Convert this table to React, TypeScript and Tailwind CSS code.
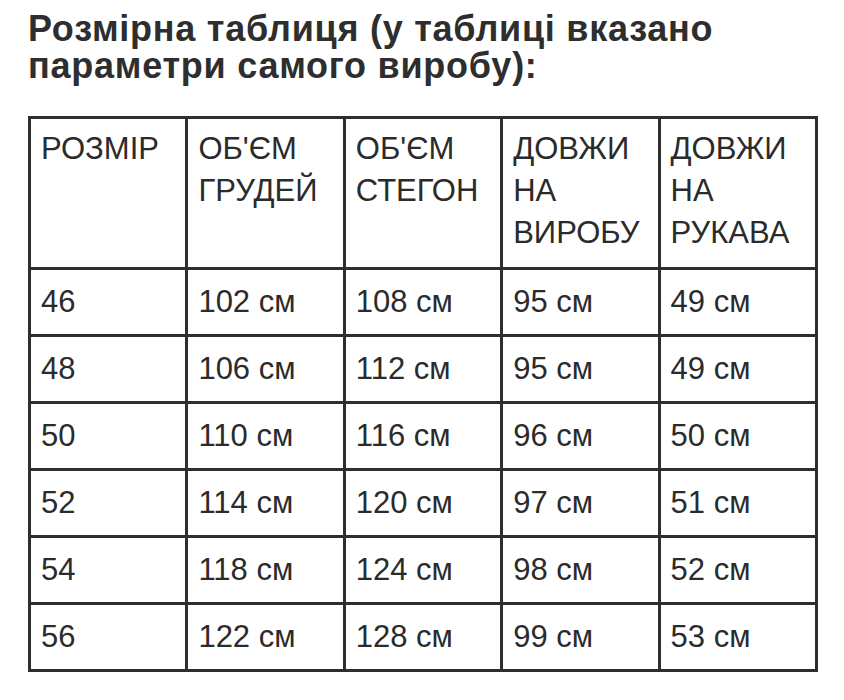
import React from "react";

const headers = [
  ["РОЗМІР"],
  ["ОБ'ЄМ", "ГРУДЕЙ"],
  ["ОБ'ЄМ", "СТЕГОН"],
  ["ДОВЖИ", "НА", "ВИРОБУ"],
  ["ДОВЖИ", "НА", "РУКАВА"],
];

const rows = [
  ["46", "102 см", "108 см", "95 см", "49 см"],
  ["48", "106 см", "112 см", "95 см", "49 см"],
  ["50", "110 см", "116 см", "96 см", "50 см"],
  ["52", "114 см", "120 см", "97 см", "51 см"],
  ["54", "118 см", "124 см", "98 см", "52 см"],
  ["56", "122 см", "128 см", "99 см", "53 см"],
];

export default function App() {
  return (
    <div
      className="w-[844px] h-[700px] bg-white text-[#2b2b2b] pt-[10px] pl-[28px]"
      style={{ fontFamily: '"Liberation Sans", Arial, sans-serif' }}
    >
      <h1 className="text-[36px] font-bold leading-[37px] tracking-[0.75px] text-[#2e2e2e]">
        Розмірна таблиця (у таблиці вказано
        <br />
        параметри самого виробу):
      </h1>
      <table className="mt-[32px] w-[790px] table-fixed border-collapse border-[3px] border-[#2e2e2e]">
        <thead>
          <tr className="h-[151px]">
            {headers.map((h, i) => (
              <th
                key={i}
                className="border-[3px] border-[#2e2e2e] align-top text-left font-normal text-[31px] leading-[42px] pl-[10px] pt-[9px]"
              >
                {h.map((l, j) => (
                  <div key={j}>{l}</div>
                ))}
              </th>
            ))}
          </tr>
        </thead>
        <tbody>
          {rows.map((r, i) => (
            <tr key={i} className="h-[67px]">
              {r.map((c, j) => (
                <td
                  key={j}
                  className="border-[3px] border-[#2e2e2e] text-[31px] leading-[40px] pl-[10px] align-middle"
                >
                  {c}
                </td>
              ))}
            </tr>
          ))}
        </tbody>
      </table>
    </div>
  );
}
